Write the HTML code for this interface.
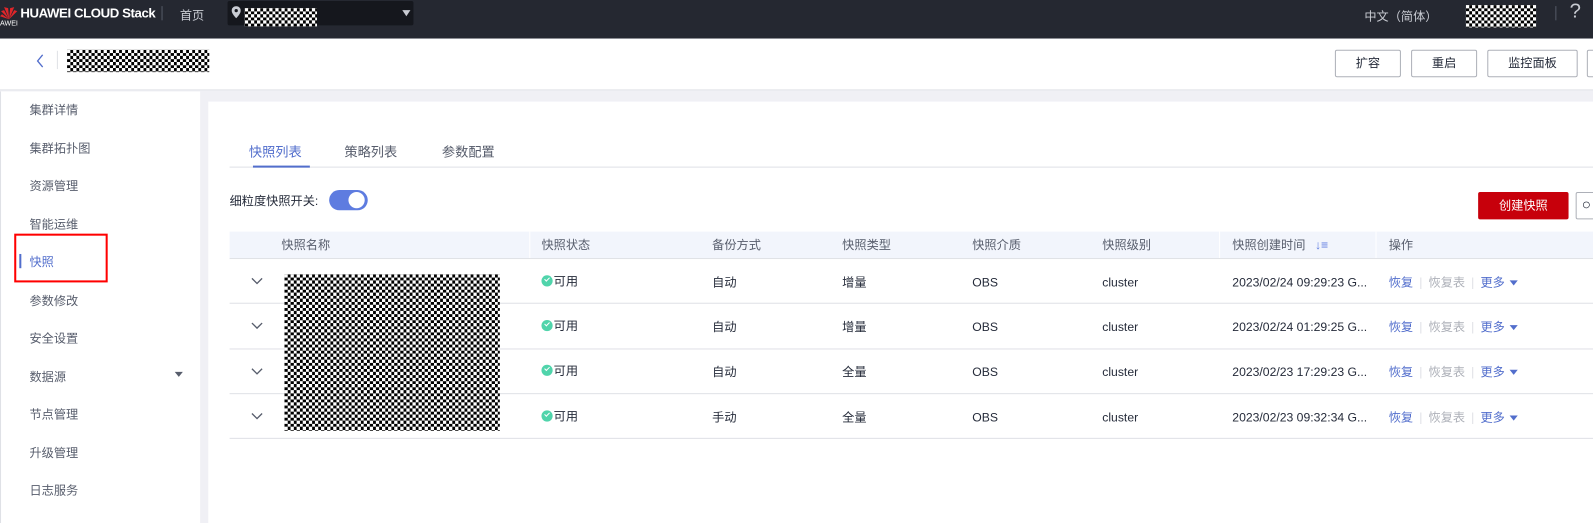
<!DOCTYPE html>
<html><head><meta charset="utf-8"><style>
*{margin:0;padding:0;box-sizing:border-box}
body{width:1593px;height:515px;overflow:hidden;background:#f0f0f5;font-family:"Liberation Sans","Noto Sans CJK SC",sans-serif;font-size:12px;color:#252b3a;position:relative}
#w{position:absolute;left:0;top:0;width:1568px;height:507px;transform:scale(1.0159);transform-origin:0 0}
.abs{position:absolute}
.chk{position:absolute;background-color:#fff;background-image:conic-gradient(#000 25%,#fff 0 50%,#000 0 75%,#fff 0);background-size:6px 6px}
.top{left:0;top:0;width:1600px;height:38px;background:#252831}
.hdr{left:0;top:38px;width:1600px;height:51px;background:#fff;border-bottom:1px solid #dfe1e6}
.side{left:0;top:90px;width:197px;height:425px;background:#fff;border-left:1px solid #dfe1e6}
.side div{position:absolute;left:28px;font-size:12px;color:#575d6c}
.btn{position:absolute;top:49px;height:27px;border:1px solid #adb0b8;border-radius:2px;background:#fff;text-align:center;line-height:25px;font-size:12px;color:#252b3a}
.panel{left:205px;top:100px;width:1400px;height:415px;background:#fff}
.th{position:absolute;top:228px;height:26px;line-height:26px;font-size:12px;color:#575d6c}
.cell{position:absolute;font-size:12px;line-height:14px;color:#252b3a}
.line{position:absolute;left:226px;width:1380px;height:1px;background:#dfe1e6}
.ok{display:inline-block;width:11px;height:11px;border-radius:50%;background:#50d4ab;vertical-align:-1px;margin-right:1px;position:relative}
.ok:after{content:"";position:absolute;left:3px;top:2px;width:4px;height:2px;border-left:1.5px solid #fff;border-bottom:1.5px solid #fff;transform:rotate(-45deg)}
.lk{color:#526ecc}.dis{color:#adb0b8}.sep{color:#dfe1e6;margin:0 6px}
.tri{display:inline-block;border-left:4px solid transparent;border-right:4px solid transparent;border-top:5px solid #526ecc;margin-left:5px;vertical-align:1px}
</style></head><body><div id="w">
<div class="abs top"></div>
<svg class="abs" style="left:0;top:4px" width="18" height="18" viewBox="0 0 18 18"><path d="M9 15 L4 3 L8 4Z M9 15 L1 7 L4 6Z M9 15 L0 12 L2 10Z" fill="#e0262a"/><path d="M9 15 L14 3 L10 4Z M9 15 L17 7 L14 6Z" fill="#e0262a"/></svg>
<div class="abs" style="left:0;top:20px;font-size:7px;color:#fff">AWEI</div>
<div class="abs" style="left:20px;top:5px;font-size:13px;font-weight:bold;color:#fff;letter-spacing:-0.4px">HUAWEI CLOUD Stack</div>
<div class="abs" style="left:159px;top:6px;width:1px;height:14px;background:#555a66"></div>
<div class="abs" style="left:177px;top:6px;font-size:12px;color:#c9ccd3">首页</div>
<div class="abs" style="left:224px;top:1px;width:183px;height:24px;background:#15171d;border-radius:2px"></div>
<svg class="abs" style="left:228px;top:6px" width="9" height="12" viewBox="0 0 9 12"><path d="M4.5 0C2 0 0 2 0 4.5 0 7.5 4.5 12 4.5 12S9 7.5 9 4.5C9 2 7 0 4.5 0Z" fill="#c9ccd3"/><circle cx="4.5" cy="4.5" r="1.6" fill="#15171d"/></svg>
<div class="chk" style="left:241px;top:8px;width:71px;height:18px"></div>
<div class="abs" style="left:396px;top:10px;border-left:4px solid transparent;border-right:4px solid transparent;border-top:6px solid #c9ccd3"></div>
<div class="abs" style="left:1343px;top:7px;font-size:12px;color:#c9ccd3">中文（简体）</div>
<div class="chk" style="left:1443px;top:5px;width:69px;height:22px"></div>
<div class="abs" style="left:1531px;top:6px;width:1px;height:14px;background:#555a66"></div>
<div class="abs" style="left:1545px;top:0px;font-size:20px;color:#c9ccd3">?</div>

<div class="abs hdr"></div>
<svg class="abs" style="left:35px;top:53px" width="10" height="14"><path d="M7 1 L2 7 L7 13" stroke="#526ecc" fill="none" stroke-width="1.3"/></svg>
<div class="abs" style="left:56px;top:50px;width:1px;height:18px;background:#dfe1e6"></div>
<div class="chk" style="left:66px;top:49px;width:140px;height:22px"></div>
<div class="btn" style="left:1314px;width:65px">扩容</div>
<div class="btn" style="left:1389px;width:65px">重启</div>
<div class="btn" style="left:1464px;width:89px">监控面板</div>
<div class="btn" style="left:1562px;width:20px"></div>

<div class="abs side">
<div style="top:9px">集群详情</div>
<div style="top:47px">集群拓扑图</div>
<div style="top:84px">资源管理</div>
<div style="top:122px">智能运维</div>
<div style="top:159px;color:#526ecc">快照</div>
<div style="top:197px">参数修改</div>
<div style="top:234px">安全设置</div>
<div style="top:272px">数据源</div>
<div style="top:309px">节点管理</div>
<div style="top:347px">升级管理</div>
<div style="top:384px">日志服务</div>
</div>
<div class="abs" style="left:19px;top:250px;width:2px;height:14px;background:#526ecc"></div>
<div class="abs" style="left:14px;top:230px;width:92px;height:48px;border:2px solid #f00"></div>
<div class="abs" style="left:172px;top:366px;border-left:4px solid transparent;border-right:4px solid transparent;border-top:5px solid #575d6c"></div>

<div class="abs panel"></div>
<div class="abs" style="left:245px;top:139px;font-size:13px;color:#526ecc">快照列表</div>
<div class="abs" style="left:339px;top:139px;font-size:13px;color:#575d6c">策略列表</div>
<div class="abs" style="left:435px;top:139px;font-size:13px;color:#575d6c">参数配置</div>
<div class="abs" style="left:226px;top:164px;width:1380px;height:1px;background:#dfe1e6"></div>
<div class="abs" style="left:249px;top:163px;width:56px;height:2px;background:#526ecc"></div>
<div class="abs" style="left:226px;top:189px;font-size:12px;color:#252b3a">细粒度快照开关:</div>
<div class="abs" style="left:324px;top:187px;width:38px;height:20px;border-radius:10px;background:#5e7ce0"></div>
<div class="abs" style="left:343px;top:189px;width:16px;height:16px;border-radius:50%;background:#fff"></div>
<div class="abs" style="left:1455px;top:189px;width:89px;height:27px;background:#c7000b;border-radius:2px;color:#fff;text-align:center;line-height:27px">创建快照</div>
<div class="abs" style="left:1551px;top:189px;width:42px;height:27px;border:1px solid #adb0b8;border-radius:2px;background:#fff;padding-left:5px;font-size:15px;line-height:24px">○</div>

<div class="abs" style="left:226px;top:228px;width:1380px;height:26px;background:#f2f5fc"></div>
<div class="abs" style="left:521px;top:228px;width:1px;height:26px;background:#fff"></div>
<div class="abs" style="left:1200px;top:228px;width:1px;height:26px;background:#fff"></div>
<div class="abs" style="left:1354px;top:228px;width:1px;height:26px;background:#fff"></div>
<div class="th" style="left:277px">快照名称</div>
<div class="th" style="left:533px">快照状态</div>
<div class="th" style="left:701px">备份方式</div>
<div class="th" style="left:829px">快照类型</div>
<div class="th" style="left:957px">快照介质</div>
<div class="th" style="left:1085px">快照级别</div>
<div class="th" style="left:1213px">快照创建时间 <span style="color:#5e7ce0;margin-left:6px">↓≡</span></div>
<div class="th" style="left:1367px">操作</div>
<div class="line" style="top:254px"></div>
<div class="line" style="top:298px"></div>
<div class="line" style="top:343px"></div>
<div class="line" style="top:387px"></div>
<div class="line" style="top:431px"></div>

<svg class="abs" style="left:247px;top:273px" width="12" height="8"><path d="M1 1L6 6L11 1" stroke="#575d6c" fill="none" stroke-width="1.3"/></svg>
<svg class="abs" style="left:247px;top:317px" width="12" height="8"><path d="M1 1L6 6L11 1" stroke="#575d6c" fill="none" stroke-width="1.3"/></svg>
<svg class="abs" style="left:247px;top:362px" width="12" height="8"><path d="M1 1L6 6L11 1" stroke="#575d6c" fill="none" stroke-width="1.3"/></svg>
<svg class="abs" style="left:247px;top:406px" width="12" height="8"><path d="M1 1L6 6L11 1" stroke="#575d6c" fill="none" stroke-width="1.3"/></svg>

<div class="cell" style="left:533px;top:270px"><span class="ok"></span>可用</div>
<div class="cell" style="left:533px;top:314px"><span class="ok"></span>可用</div>
<div class="cell" style="left:533px;top:358px"><span class="ok"></span>可用</div>
<div class="cell" style="left:533px;top:403px"><span class="ok"></span>可用</div>
<div class="cell" style="left:701px;top:271px">自动</div><div class="cell" style="left:701px;top:315px">自动</div><div class="cell" style="left:701px;top:359px">自动</div><div class="cell" style="left:701px;top:404px">手动</div>
<div class="cell" style="left:829px;top:271px">增量</div><div class="cell" style="left:829px;top:315px">增量</div><div class="cell" style="left:829px;top:359px">全量</div><div class="cell" style="left:829px;top:404px">全量</div>
<div class="cell" style="left:957px;top:271px">OBS</div><div class="cell" style="left:957px;top:315px">OBS</div><div class="cell" style="left:957px;top:359px">OBS</div><div class="cell" style="left:957px;top:404px">OBS</div>
<div class="cell" style="left:1085px;top:271px">cluster</div><div class="cell" style="left:1085px;top:315px">cluster</div><div class="cell" style="left:1085px;top:359px">cluster</div><div class="cell" style="left:1085px;top:404px">cluster</div>
<div class="cell" style="left:1213px;top:271px">2023/02/24 09:29:23 G...</div>
<div class="cell" style="left:1213px;top:315px">2023/02/24 01:29:25 G...</div>
<div class="cell" style="left:1213px;top:359px">2023/02/23 17:29:23 G...</div>
<div class="cell" style="left:1213px;top:404px">2023/02/23 09:32:34 G...</div>
<div class="cell" style="left:1367px;top:271px"><span class="lk">恢复</span><span class="sep">|</span><span class="dis">恢复表</span><span class="sep">|</span><span class="lk">更多</span><span class="tri"></span></div>
<div class="cell" style="left:1367px;top:315px"><span class="lk">恢复</span><span class="sep">|</span><span class="dis">恢复表</span><span class="sep">|</span><span class="lk">更多</span><span class="tri"></span></div>
<div class="cell" style="left:1367px;top:359px"><span class="lk">恢复</span><span class="sep">|</span><span class="dis">恢复表</span><span class="sep">|</span><span class="lk">更多</span><span class="tri"></span></div>
<div class="cell" style="left:1367px;top:404px"><span class="lk">恢复</span><span class="sep">|</span><span class="dis">恢复表</span><span class="sep">|</span><span class="lk">更多</span><span class="tri"></span></div>

<div class="chk" style="left:280px;top:270px;width:212px;height:154px"></div>
</div></body></html>
